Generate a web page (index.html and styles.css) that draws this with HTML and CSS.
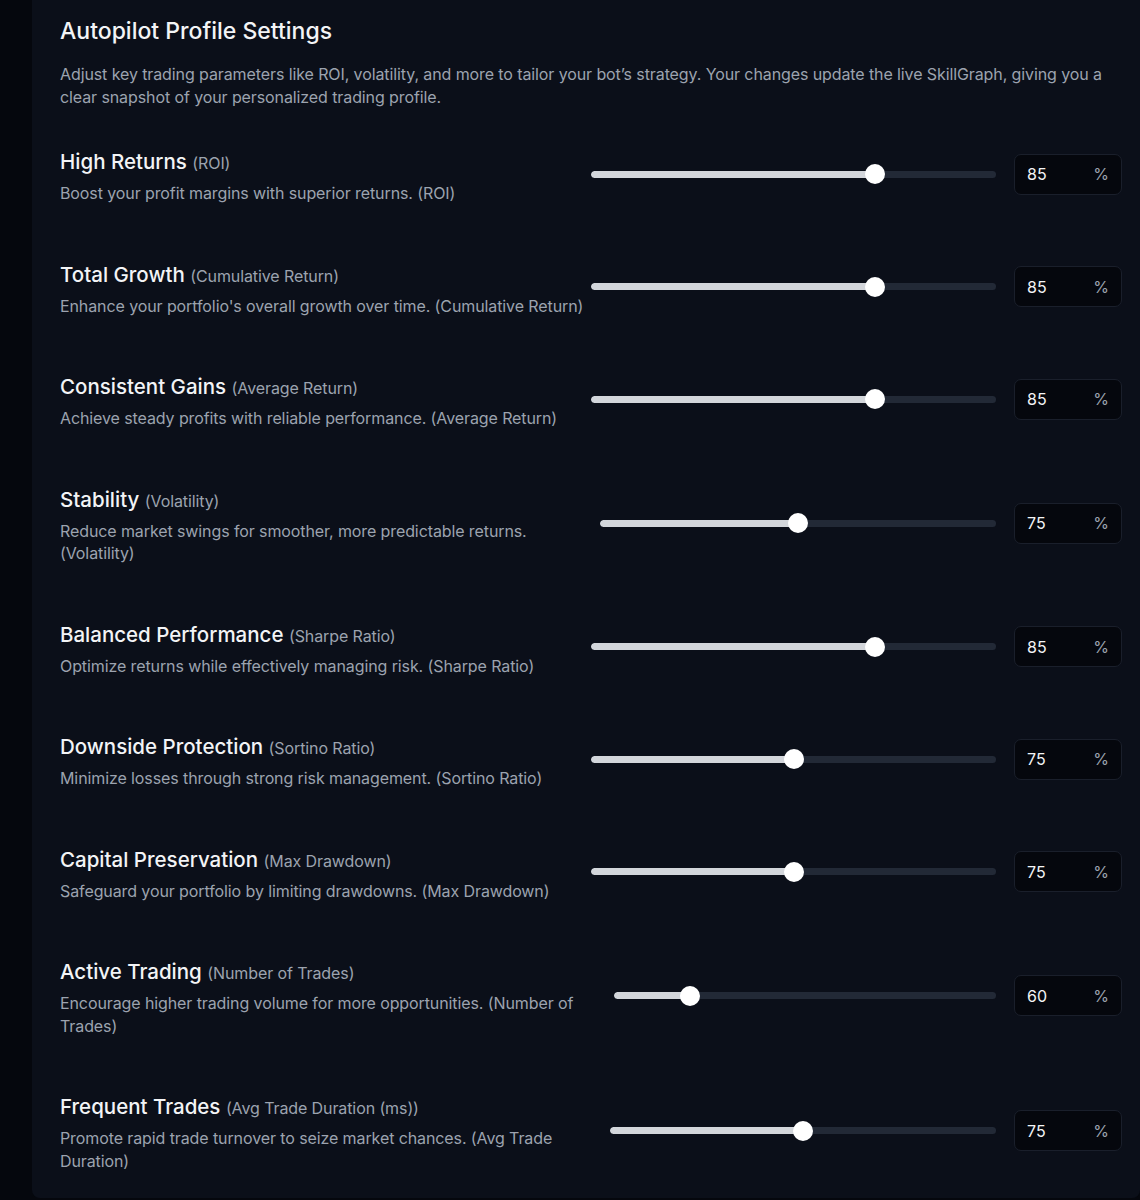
FILE: index.html
```html
<!DOCTYPE html>
<html lang="en">

<head>
    <meta charset="UTF-8">
    <meta name="viewport" content="width=device-width, initial-scale=1.0">
    <title>Autopilot Profile Settings</title>
    <link rel="stylesheet" href="styles.css">
</head>

<body>
    <div class="page">
        <div class="panel">
            <h2 class="panel-title">Autopilot Profile Settings</h2>
            <p class="panel-intro">Adjust key trading parameters like ROI, volatility, and more to tailor your bot’s strategy. Your changes update the live SkillGraph, giving you a clear snapshot of your personalized trading profile.</p>

            <div class="settings">
                <div class="setting">
                    <div class="info">
                        <div class="label">High Returns <span class="metric">(ROI)</span></div>
                        <div class="desc">Boost your profit margins with superior returns. (ROI)</div>
                    </div>
                    <div class="control">
                        <div class="slider" style="--pct: 70%">
                            <div class="track"><div class="fill"></div></div>
                            <div class="thumb"></div>
                        </div>
                        <div class="value"><span>85</span><span class="unit">%</span></div>
                    </div>
                </div>

                <div class="setting">
                    <div class="info">
                        <div class="label">Total Growth <span class="metric">(Cumulative Return)</span></div>
                        <div class="desc">Enhance your portfolio's overall growth over time. (Cumulative Return)</div>
                    </div>
                    <div class="control">
                        <div class="slider" style="--pct: 70%">
                            <div class="track"><div class="fill"></div></div>
                            <div class="thumb"></div>
                        </div>
                        <div class="value"><span>85</span><span class="unit">%</span></div>
                    </div>
                </div>

                <div class="setting">
                    <div class="info">
                        <div class="label">Consistent Gains <span class="metric">(Average Return)</span></div>
                        <div class="desc">Achieve steady profits with reliable performance. (Average Return)</div>
                    </div>
                    <div class="control">
                        <div class="slider" style="--pct: 70%">
                            <div class="track"><div class="fill"></div></div>
                            <div class="thumb"></div>
                        </div>
                        <div class="value"><span>85</span><span class="unit">%</span></div>
                    </div>
                </div>

                <div class="setting">
                    <div class="info">
                        <div class="label">Stability <span class="metric">(Volatility)</span></div>
                        <div class="desc">Reduce market swings for smoother, more predictable returns. (Volatility)</div>
                    </div>
                    <div class="control">
                        <div class="slider" style="--pct: 50%">
                            <div class="track"><div class="fill"></div></div>
                            <div class="thumb"></div>
                        </div>
                        <div class="value"><span>75</span><span class="unit">%</span></div>
                    </div>
                </div>

                <div class="setting">
                    <div class="info">
                        <div class="label">Balanced Performance <span class="metric">(Sharpe Ratio)</span></div>
                        <div class="desc">Optimize returns while effectively managing risk. (Sharpe Ratio)</div>
                    </div>
                    <div class="control">
                        <div class="slider" style="--pct: 70%">
                            <div class="track"><div class="fill"></div></div>
                            <div class="thumb"></div>
                        </div>
                        <div class="value"><span>85</span><span class="unit">%</span></div>
                    </div>
                </div>

                <div class="setting">
                    <div class="info">
                        <div class="label">Downside Protection <span class="metric">(Sortino Ratio)</span></div>
                        <div class="desc">Minimize losses through strong risk management. (Sortino Ratio)</div>
                    </div>
                    <div class="control">
                        <div class="slider" style="--pct: 50%">
                            <div class="track"><div class="fill"></div></div>
                            <div class="thumb"></div>
                        </div>
                        <div class="value"><span>75</span><span class="unit">%</span></div>
                    </div>
                </div>

                <div class="setting">
                    <div class="info">
                        <div class="label">Capital Preservation <span class="metric">(Max Drawdown)</span></div>
                        <div class="desc">Safeguard your portfolio by limiting drawdowns. (Max Drawdown)</div>
                    </div>
                    <div class="control">
                        <div class="slider" style="--pct: 50%">
                            <div class="track"><div class="fill"></div></div>
                            <div class="thumb"></div>
                        </div>
                        <div class="value"><span>75</span><span class="unit">%</span></div>
                    </div>
                </div>

                <div class="setting">
                    <div class="info">
                        <div class="label">Active Trading <span class="metric">(Number of Trades)</span></div>
                        <div class="desc">Encourage higher trading volume for more opportunities. (Number of Trades)</div>
                    </div>
                    <div class="control">
                        <div class="slider" style="--pct: 20%">
                            <div class="track"><div class="fill"></div></div>
                            <div class="thumb"></div>
                        </div>
                        <div class="value"><span>60</span><span class="unit">%</span></div>
                    </div>
                </div>

                <div class="setting">
                    <div class="info">
                        <div class="label">Frequent Trades <span class="metric">(Avg Trade Duration (ms))</span></div>
                        <div class="desc">Promote rapid trade turnover to seize market chances. (Avg Trade Duration)</div>
                    </div>
                    <div class="control">
                        <div class="slider" style="--pct: 50%">
                            <div class="track"><div class="fill"></div></div>
                            <div class="thumb"></div>
                        </div>
                        <div class="value"><span>75</span><span class="unit">%</span></div>
                    </div>
                </div>
            </div>
        </div>
    </div>
</body>

</html>
```

FILE: styles.css
```css
body {
    margin: 0;
    background-color: #05070d;
    font-family: Inter, "Noto Sans", sans-serif;
    color: #f3f4f6;
}

.page {
    padding-left: 32px;
}

.panel {
    background-color: #0b0f19;
    padding: 17px 18px 0 28px;
    border-radius: 0 0 8px 8px;
}

.panel-title {
    margin: 0;
    font-size: 23px;
    line-height: 28px;
    font-weight: 500;
}

.panel-intro {
    margin: 18px 0 10px 0;
    font-size: 16px;
    line-height: 23px;
    letter-spacing: -0.1px;
    color: #9ca3af;
}

/* one row per parameter: text on the left, slider + box on the right */
.setting {
    display: flex;
    align-items: center;
    gap: 4px;
    padding: 29px 0 27px 0;
}

.setting:last-child {
    padding-bottom: 26px;
}

.info {
    flex: 1 1 auto;
}

.label {
    font-size: 20.5px;
    line-height: 27px;
    font-weight: 500;
}

.metric {
    font-size: 16px;
    line-height: 1;
    font-weight: 400;
    letter-spacing: -0.1px;
    color: #9ca3af;
}

.desc {
    margin-top: 7px;
    font-size: 16px;
    line-height: 22.5px;
    letter-spacing: -0.1px;
    color: #9ca3af;
}

.control {
    flex: 0 1 531px;
    display: flex;
    align-items: center;
    gap: 18px;
    margin-bottom: 4px;
}

.slider {
    flex: 1;
    position: relative;
    height: 20px;
    display: flex;
    align-items: center;
}

.track {
    width: 100%;
    height: 7px;
    border-radius: 4px;
    background-color: #222936;
    overflow: hidden;
}

.fill {
    width: var(--pct);
    height: 100%;
    border-radius: 4px;
    background-color: #d3d6db;
}

.thumb {
    position: absolute;
    top: 0;
    left: var(--pct);
    width: 20px;
    height: 20px;
    margin-left: -10px;
    border-radius: 50%;
    background-color: #ffffff;
}

.value {
    flex: none;
    width: 108px;
    height: 41px;
    box-sizing: border-box;
    display: flex;
    align-items: center;
    justify-content: space-between;
    padding: 0 12px;
    background-color: #05070d;
    border: 1px solid #1a1f2b;
    border-radius: 7px;
    font-size: 16px;
    color: #f3f4f6;
}

.unit {
    color: #9ca3af;
}
```
